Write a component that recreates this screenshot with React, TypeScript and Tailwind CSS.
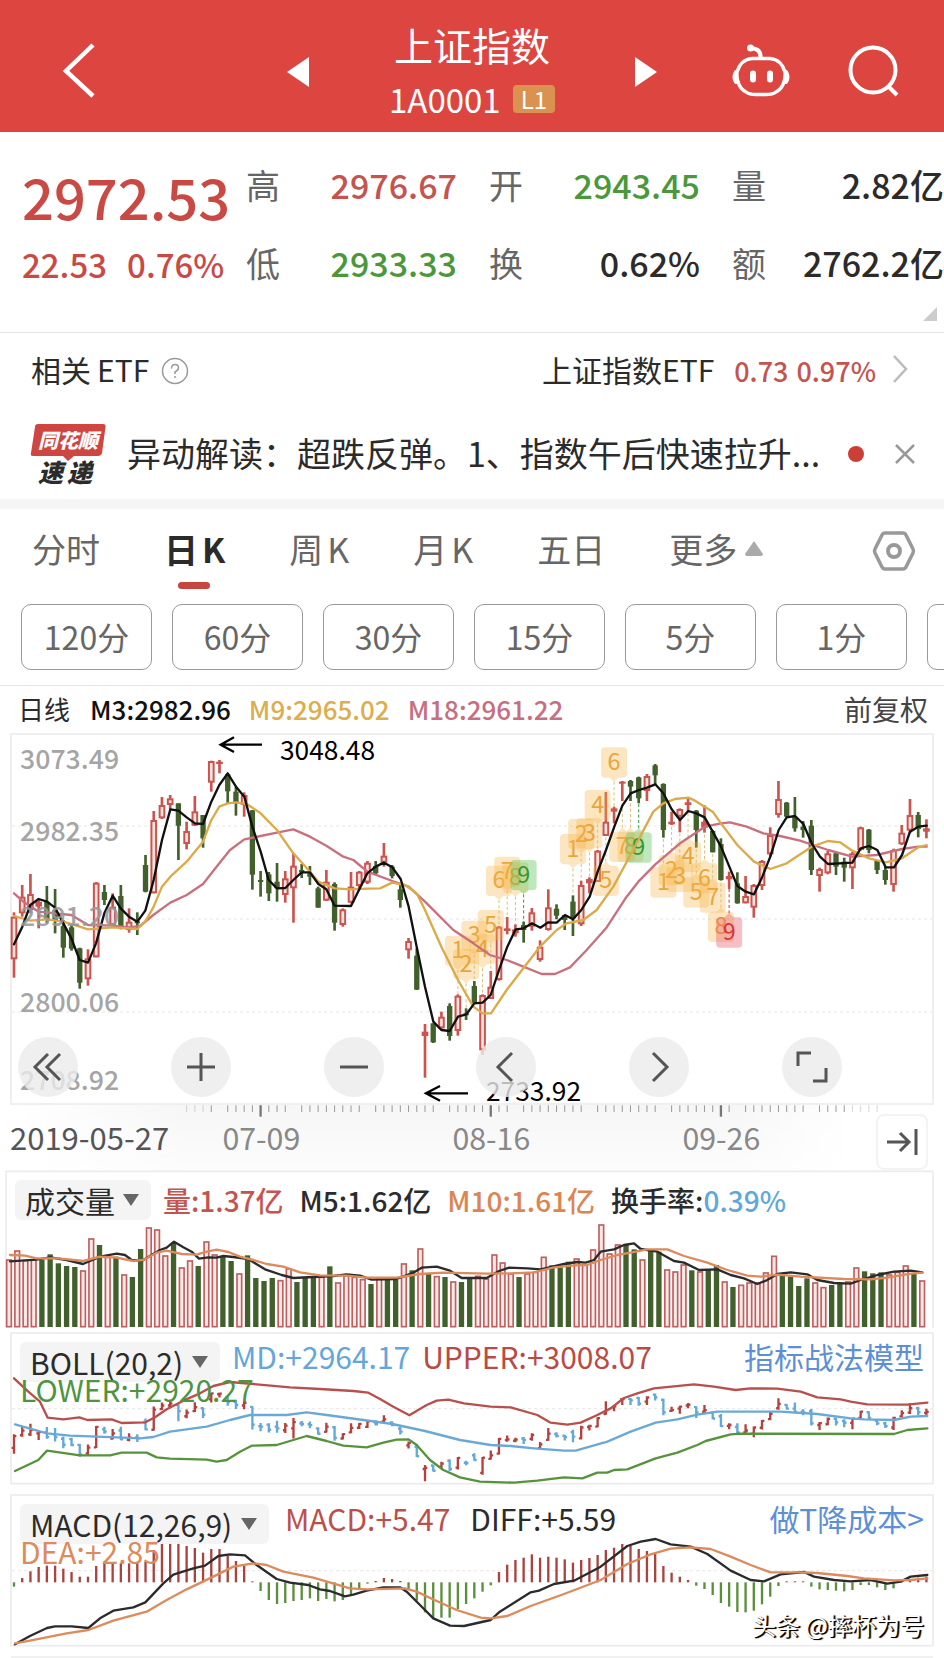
import type { ReactNode } from "react"
import clsx from "clsx"

type Direction = "up" | "down"
type Point = [number, number]

// [direction, high, body top, body bottom, low], oldest first
type Candle = [Direction, number, number, number, number]

const STEP = 24.66
const FIRST_X = 42
const candleX = (i: number) => FIRST_X + STEP * i

const u = "up" as const
const d = "down" as const

const CANDLES: Candle[] = [
  [u, 697, 710, 838, 893], [u, 615, 650, 700, 710], [u, 582, 642, 690, 700], [u, 655, 665, 680, 745],
  [d, 618, 665, 720, 730], [d, 627, 690, 720, 760], [d, 720, 738, 803, 833], [d, 735, 742, 806, 812],
  [d, 803, 805, 908, 926], [u, 808, 835, 898, 917], [u, 606, 608, 832, 832], [d, 615, 636, 660, 675],
  [u, 640, 680, 735, 740], [d, 615, 648, 745, 748], [u, 685, 725, 750, 758], [d, 697, 724, 730, 765],
  [d, 525, 555, 635, 637], [u, 393, 420, 640, 640], [u, 351, 375, 415, 417], [u, 345, 355, 375, 388],
  [d, 370, 370, 437, 540], [u, 425, 453, 492, 508], [u, 348, 394, 437, 438], [d, 405, 405, 475, 503],
  [u, 242, 243, 308, 335], [u, 240, 245, 252, 280], [d, 280, 283, 334, 370], [d, 320, 335, 370, 407],
  [u, 337, 345, 375, 410], [d, 390, 391, 584, 629], [d, 573, 600, 606, 650], [d, 576, 583, 640, 663],
  [d, 549, 605, 625, 665], [u, 573, 595, 645, 668], [u, 520, 557, 625, 728], [d, 552, 570, 577, 594],
  [d, 558, 580, 590, 615], [d, 620, 625, 683, 683], [u, 570, 605, 662, 663], [d, 607, 612, 728, 752],
  [u, 685, 688, 735, 740], [u, 576, 620, 668, 670], [u, 573, 575, 618, 625], [u, 543, 548, 608, 612],
  [d, 543, 558, 580, 585], [u, 489, 527, 548, 560], [d, 555, 560, 588, 595], [d, 610, 628, 660, 683],
  [u, 774, 783, 811, 836], [d, 805, 827, 929, 930], [u, 1032, 1055, 1068, 1193], [d, 1030, 1030, 1087, 1089],
  [u, 995, 1010, 1045, 1050], [d, 970, 978, 1068, 1082], [u, 943, 947, 1053, 1067], [d, 985, 1000, 1004, 1020],
  [d, 903, 918, 970, 970], [u, 943, 945, 1111, 1124], [u, 873, 920, 957, 957], [u, 738, 740, 900, 902],
  [u, 711, 745, 753, 763], [u, 733, 748, 760, 770], [d, 725, 735, 750, 788], [u, 684, 697, 740, 752],
  [u, 781, 800, 840, 845], [u, 628, 682, 750, 752], [d, 673, 686, 707, 718], [d, 705, 705, 720, 750],
  [d, 646, 665, 715, 768], [u, 602, 615, 733, 738], [u, 592, 597, 610, 640], [u, 510, 512, 606, 606],
  [u, 336, 425, 468, 468], [u, 380, 385, 395, 430], [u, 303, 305, 310, 363], [d, 300, 303, 320, 363],
  [d, 290, 292, 355, 370], [u, 282, 288, 333, 363], [d, 252, 256, 286, 312], [d, 310, 312, 450, 473],
  [u, 395, 425, 433, 435], [u, 385, 387, 410, 457], [u, 355, 367, 375, 398], [d, 390, 392, 450, 503],
  [u, 376, 425, 443, 458], [d, 450, 453, 517, 517], [d, 475, 492, 600, 602], [u, 575, 588, 598, 627],
  [d, 577, 610, 670, 671], [u, 588, 648, 670, 670], [u, 612, 615, 683, 713], [u, 540, 543, 618, 630],
  [u, 442, 465, 523, 530], [u, 303, 357, 405, 413], [d, 366, 368, 410, 412], [d, 351, 410, 445, 455],
  [d, 423, 440, 450, 473], [d, 420, 437, 570, 585], [u, 563, 567, 588, 635], [u, 513, 520, 580, 583],
  [d, 518, 520, 560, 585], [d, 533, 545, 563, 605], [u, 516, 520, 565, 627], [u, 440, 442, 510, 512],
  [d, 447, 449, 510, 520], [d, 540, 543, 570, 582], [d, 560, 570, 600, 614], [u, 506, 510, 615, 635],
  [u, 435, 458, 493, 495], [u, 357, 405, 452, 460], [d, 396, 405, 447, 472], [u, 418, 445, 455, 475],
]

const MA3: Point[] = [
  [42, 793], [67, 740], [91, 675], [116, 657], [141, 665], [165, 683], [190, 730], [214, 775], [239, 840],
  [264, 848], [288, 790], [313, 700], [338, 647], [362, 685], [387, 710], [412, 725], [436, 692], [461, 600],
  [486, 480], [511, 388], [535, 392], [560, 412], [585, 430], [609, 432], [634, 365], [658, 315], [683, 280],
  [708, 320], [733, 350], [757, 440], [782, 515], [806, 600], [831, 625], [856, 624], [880, 600], [905, 577],
  [930, 577], [955, 612], [979, 628], [1004, 677], [1053, 678], [1102, 580], [1127, 560], [1152, 548],
  [1177, 562], [1202, 597], [1226, 680], [1250, 800], [1275, 920], [1300, 1025], [1324, 1050], [1349, 1053],
  [1374, 1010], [1399, 1003], [1423, 970], [1448, 968], [1472, 945], [1497, 870], [1522, 800], [1547, 748],
  [1571, 745], [1596, 730], [1621, 743], [1645, 727], [1670, 728], [1695, 705], [1719, 718], [1744, 690],
  [1769, 650], [1793, 575], [1818, 510], [1843, 440], [1867, 377], [1892, 340], [1917, 330], [1941, 323],
  [1966, 313], [1990, 340], [2015, 388], [2040, 420], [2065, 393], [2089, 400], [2114, 412], [2138, 455],
  [2163, 500], [2188, 560], [2212, 618], [2237, 635], [2262, 643], [2287, 590], [2311, 530], [2336, 450],
  [2360, 412], [2385, 408], [2410, 432], [2435, 490], [2460, 530], [2484, 552], [2557, 548], [2582, 505],
  [2607, 498], [2632, 510], [2657, 562], [2682, 562], [2706, 525], [2730, 455], [2755, 440], [2780, 437],
]

const MA9: Point[] = [
  [42, 708], [91, 722], [141, 718], [190, 725], [239, 740], [264, 748], [338, 742], [412, 747], [436, 725],
  [461, 680], [486, 620], [511, 590], [560, 545], [609, 485], [634, 420], [658, 380], [683, 370], [708, 367],
  [740, 372], [782, 400], [831, 450], [880, 520], [930, 575], [955, 605], [1004, 625], [1053, 628], [1102, 626],
  [1140, 625], [1177, 608], [1215, 615], [1250, 640], [1275, 690], [1324, 800], [1374, 900], [1420, 980],
  [1448, 1000], [1473, 1000], [1520, 930], [1570, 865], [1620, 800], [1670, 750], [1700, 730], [1750, 720],
  [1790, 690], [1840, 620], [1867, 570], [1915, 480], [1960, 395], [1990, 370], [2025, 357], [2065, 353],
  [2085, 362], [2138, 395], [2163, 430], [2212, 495], [2262, 545], [2311, 567], [2360, 550], [2435, 500],
  [2484, 483], [2520, 487], [2557, 512], [2607, 535], [2657, 547], [2706, 535], [2755, 502], [2780, 495],
]

const MA18: Point[] = [
  [42, 640], [70, 665], [116, 695], [165, 700], [214, 705], [264, 735], [338, 737], [387, 742], [420, 738],
  [460, 705], [511, 668], [560, 645], [609, 612], [658, 550], [690, 510], [733, 478], [782, 468], [831, 458],
  [880, 448], [930, 470], [979, 497], [1030, 530], [1060, 540], [1102, 575], [1177, 603], [1226, 620],
  [1275, 665], [1360, 750], [1420, 790], [1470, 825], [1520, 840], [1570, 860], [1625, 882], [1665, 882],
  [1710, 862], [1760, 810], [1818, 745], [1880, 650], [1915, 605], [1966, 553], [2040, 490], [2115, 440],
  [2163, 430], [2190, 427], [2240, 440], [2290, 460], [2340, 468], [2400, 482], [2484, 510], [2557, 530],
  [2630, 525], [2706, 507], [2755, 500], [2780, 500],
]

// TD sequence markers: [candle index, count, y of the digit, side of the candle]
type Marker = [number, number, number, "above" | "below"]

const MARKERS: Marker[] = [
  [54, 1, 810, "above"], [55, 2, 850, "above"], [56, 3, 765, "above"], [57, 4, 805, "above"], [58, 5, 733, "above"],
  [59, 6, 600, "above"], [60, 7, 573, "above"], [61, 8, 590, "above"], [62, 9, 583, "above"],
  [68, 1, 505, "above"], [69, 2, 460, "above"], [70, 3, 457, "above"], [71, 4, 373, "above"], [72, 5, 600, "below"],
  [73, 6, 245, "above"], [74, 7, 498, "below"], [75, 8, 498, "below"], [76, 9, 500, "below"],
  [79, 1, 605, "below"], [80, 2, 568, "below"], [81, 3, 588, "below"], [82, 4, 528, "below"], [83, 5, 635, "below"],
  [84, 6, 592, "below"], [85, 7, 650, "below"], [86, 8, 738, "below"], [87, 9, 755, "below"],
]

const VOLUME_TOPS = [
  298, 271, 300, 298, 300, 283, 310, 318, 321, 331, 235, 255, 290, 290, 343, 351, 267, 202, 208, 286, 248, 322, 301,
  318, 244, 283, 288, 303, 340, 286, 354, 363, 354, 360, 325, 366, 354, 354, 350, 319, 367, 345, 350, 357, 372, 355,
  357, 360, 310, 331, 265, 342, 348, 351, 364, 366, 357, 347, 355, 283, 307, 340, 351, 340, 335, 290, 316, 322, 305,
  295, 313, 268, 193, 280, 253, 255, 268, 298, 273, 275, 328, 334, 313, 331, 334, 328, 315, 364, 381, 374, 367, 367,
  337, 287, 348, 350, 378, 355, 367, 381, 375, 372, 364, 322, 334, 340, 337, 343, 335, 316, 340, 361,
]

const VOLUME_DOWN = new Set([
  4, 5, 6, 7, 8, 11, 13, 15, 16, 20, 23, 26, 27, 29, 30, 31, 32, 35, 36, 37, 39, 44, 46, 47, 49, 51, 53, 55, 56, 62,
  66, 67, 68, 75, 76, 78, 79, 83, 85, 86, 88, 94, 95, 96, 97, 100, 101, 104, 105, 106, 110,
])

const VOLUME_MA5: Point[] = [
  [30, 304], [110, 299], [150, 292], [200, 300], [249, 312], [300, 290], [350, 281], [375, 285], [395, 300],
  [425, 303], [450, 288], [480, 270], [500, 263], [522, 245], [550, 262], [575, 275], [597, 296], [625, 292],
  [650, 293], [670, 288], [700, 291], [745, 297], [795, 328], [845, 345], [880, 354], [1000, 348], [1040, 343],
  [1080, 347], [1115, 359], [1190, 357], [1240, 338], [1265, 323], [1310, 320], [1350, 332], [1385, 354],
  [1460, 354], [1497, 333], [1527, 323], [1582, 325], [1622, 328], [1692, 312], [1732, 306], [1757, 308],
  [1782, 300], [1802, 275], [1842, 268], [1872, 255], [1902, 250], [1922, 267], [1972, 275], [2022, 303],
  [2052, 308], [2097, 330], [2152, 328], [2192, 345], [2232, 355], [2272, 372], [2302, 360], [2332, 342],
  [2372, 337], [2422, 343], [2452, 360], [2502, 369], [2552, 371], [2582, 360], [2632, 345], [2682, 335],
  [2732, 332], [2767, 337],
]

const VOLUME_MA10: Point[] = [
  [30, 285], [75, 287], [110, 295], [175, 295], [250, 303], [300, 290], [350, 293], [400, 303], [430, 300],
  [470, 278], [500, 272], [545, 282], [590, 284], [620, 275], [650, 269], [685, 276], [720, 290], [760, 300],
  [800, 312], [850, 320], [900, 337], [960, 346], [1040, 347], [1100, 353], [1190, 353], [1260, 342], [1330, 338],
  [1462, 341], [1532, 340], [1602, 337], [1662, 322], [1722, 316], [1762, 315], [1802, 300], [1852, 285],
  [1892, 278], [1942, 268], [2002, 268], [2052, 288], [2122, 308], [2182, 330], [2242, 347], [2282, 350],
  [2332, 344], [2402, 350], [2532, 357], [2612, 358], [2662, 353], [2732, 341], [2767, 338],
]

const BOLL_UPPER: Point[] = [
  [42, -65], [85, -25], [120, 5], [143, 53], [190, 58], [238, 52], [262, 60], [335, 58], [365, 69], [436, 67],
  [465, 52], [500, 28], [550, 2], [600, -20], [640, -42], [690, -54], [760, -48], [870, -38], [960, -33],
  [1060, -27], [1105, -22], [1140, -3], [1180, 20], [1228, 46], [1280, 15], [1310, 2], [1345, -1], [1392, 10],
  [1472, 20], [1532, 22], [1612, 45], [1652, 68], [1702, 74], [1742, 68], [1792, 45], [1832, 25], [1872, -6],
  [1912, -20], [1962, -35], [2082, -47], [2142, -40], [2207, -30], [2252, -35], [2332, -34], [2402, -25],
  [2452, -8], [2522, -2], [2552, 5], [2602, 13], [2722, 14], [2782, 8],
]

const BOLL_MID: Point[] = [
  [45, 73], [141, 100], [210, 107], [370, 113], [420, 115], [460, 111], [510, 95], [620, 80], [690, 60], [750, 45],
  [860, 45], [920, 37], [980, 45], [1090, 60], [1177, 72], [1275, 93], [1380, 120], [1472, 135], [1532, 138],
  [1602, 145], [1692, 152], [1727, 152], [1822, 125], [1892, 95], [1967, 68], [2032, 58], [2092, 44], [2152, 35],
  [2342, 35], [2452, 42], [2552, 55], [2592, 58], [2682, 60], [2732, 50], [2782, 48],
]

const BOLL_LOWER: Point[] = [
  [45, 213], [115, 180], [141, 152], [240, 166], [330, 166], [365, 158], [440, 158], [470, 172], [510, 176],
  [620, 179], [650, 185], [680, 180], [720, 155], [755, 137], [830, 135], [880, 120], [920, 108], [980, 123],
  [1030, 137], [1100, 142], [1150, 128], [1190, 119], [1226, 118], [1250, 135], [1290, 180], [1330, 210],
  [1380, 232], [1440, 245], [1542, 248], [1612, 242], [1692, 232], [1747, 235], [1792, 218], [1822, 218],
  [1842, 210], [1882, 208], [1967, 175], [2032, 158], [2092, 135], [2117, 123], [2192, 103], [2222, 101],
  [2682, 102], [2722, 90], [2782, 85],
]

const MACD_BARS = [
  560, 534, 514, 501, 497, 497, 506, 516, 530, 530, 498, 485, 490, 490, 490, 487, 485, 450, 430, 425, 425, 438, 444,
  458, 447, 447, 467, 483, 497, 544, 573, 600, 612, 609, 603, 600, 595, 603, 597, 604, 600, 585, 568, 551, 543, 534,
  537, 543, 570, 602, 637, 653, 653, 653, 627, 612, 595, 575, 556, 516, 494, 480, 473, 463, 473, 470, 473, 478, 488,
  480, 474, 465, 450, 443, 432, 437, 447, 453, 462, 498, 518, 530, 540, 557, 567, 585, 609, 620, 636, 637, 632, 613,
  590, 558, 544, 544, 544, 560, 568, 570, 572, 574, 570, 555, 555, 562, 570, 565, 540, 537, 533, 530,
]

const DIFF: Point[] = [
  [45, 733], [90, 708], [141, 684], [165, 679], [215, 679], [265, 684], [300, 655], [340, 632], [400, 622],
  [436, 607], [490, 550], [520, 524], [580, 505], [615, 497], [655, 468], [690, 463], [735, 466], [770, 495],
  [830, 537], [870, 548], [925, 555], [960, 568], [990, 573], [1035, 589], [1060, 584], [1100, 572], [1150, 562],
  [1200, 562], [1220, 575], [1260, 615], [1300, 655], [1350, 677], [1392, 678], [1472, 660], [1497, 637],
  [1592, 577], [1617, 572], [1662, 552], [1722, 542], [1802, 500], [1882, 438], [1922, 425], [1967, 417],
  [2012, 433], [2072, 440], [2122, 462], [2192, 512], [2252, 540], [2292, 544], [2342, 523], [2412, 516],
  [2442, 530], [2502, 540], [2552, 544], [2612, 540], [2662, 551], [2702, 545], [2732, 530], [2782, 525],
]

const DEA: Point[] = [
  [45, 730], [90, 722], [200, 700], [265, 690], [340, 662], [440, 635], [500, 600], [560, 568], [640, 530],
  [700, 500], [760, 490], [800, 495], [850, 515], [940, 533], [1050, 565], [1100, 568], [1215, 565], [1250, 575],
  [1310, 603], [1370, 630], [1442, 653], [1472, 655], [1522, 648], [1592, 618], [1692, 582], [1802, 540],
  [1882, 492], [1952, 463], [2012, 446], [2072, 442], [2132, 447], [2192, 470], [2252, 495], [2312, 517],
  [2402, 517], [2452, 519], [2542, 528], [2592, 535], [2682, 541], [2732, 540], [2782, 535],
]

const PRICE_LABELS = [
  { text: "3073.49", y: 267 },
  { text: "2982.35", y: 482 },
  { text: "2891.20", y: 737 },
  { text: "2800.06", y: 995 },
  { text: "2708.92", y: 1229 },
]

const RED = "#cb544e"
const GREEN = "#42602c"

function Line({ points, color, width = 7 }: { points: Point[]; color: string; width?: number }) {
  return (
    <polyline
      points={points.map((p) => p.join(",")).join(" ")}
      fill="none"
      stroke={color}
      strokeWidth={width}
      strokeLinejoin="round"
      strokeLinecap="round"
    />
  )
}

function GridLine({ y }: { y: number }) {
  return <path d={`M36 ${y}H2796`} stroke="#e6e6e6" strokeWidth="3" strokeDasharray="9 9" />
}

function CandleShape({ candle, x }: { candle: Candle; x: number }) {
  const [dir, high, top, bottom, low] = candle
  const height = Math.max(bottom - top, 6)
  if (dir === "down") {
    return (
      <g fill={GREEN}>
        <rect x={x - 4} y={high} width="8" height={low - high} />
        <rect x={x - 8} y={top} width="16" height={height} />
      </g>
    )
  }
  return (
    <g fill={RED}>
      <rect x={x - 4} y={high} width="8" height={low - high} />
      <rect x={x - 10} y={top} width="20" height={height} />
      {height > 18 && <rect x={x - 4} y={top + 6} width="8" height={height - 12} fill="#fbe3df" />}
    </g>
  )
}

function MarkerTag({ marker }: { marker: Marker }) {
  const [index, count, y, side] = marker
  const x = candleX(index)
  const above = side === "above"
  const last = count === 9
  const green = above || index === 76
  const fill = last ? (green ? "#5cc45c" : "#e8606a") : "#f7b64a"
  const color = last ? (green ? "#2f9a34" : "#d8333c") : "#e9a53b"
  const [, high, , , low] = CANDLES[index]
  const tip = above ? `M${x - 14} ${y + 48}h28l-14 12z` : `M${x - 14} ${y - 43}h28l-14 -12z`
  return (
    <g>
      <path
        d={above ? `M${x} ${y + 60}V${high}` : `M${x} ${y - 55}V${low}`}
        stroke={last ? color : "#d9c07c"}
        strokeWidth="3"
        strokeDasharray="9 7"
      />
      <g fill={fill} fillOpacity={last ? 0.4 : 0.34}>
        <rect x={x - 39} y={y - 43} width="78" height="91" rx="12" />
        <path d={tip} />
      </g>
      <text x={x} y={y + 25} fontSize="70" textAnchor="middle" fill={color}>
        {count}
      </text>
    </g>
  )
}

function PriceChart() {
  const ticks = Array.from({ length: 85 }, (_, n) => n + 21).filter((i) => i % 9 !== 7)
  return (
    <svg viewBox="0 159 2832 1311" className="block w-full overflow-visible" role="img" aria-label="日线">
      <defs>
        <linearGradient id="axis-shade">
          <stop offset="0.02" stopColor="#fff" />
          <stop offset="0.2" stopColor="#f6f6f6" />
          <stop offset="0.78" stopColor="#f6f6f6" />
          <stop offset="0.9" stopColor="#fff" />
        </linearGradient>
        <linearGradient id="axis-fade" x2="0" y2="1">
          <stop offset="0" stopColor="#fff" stopOpacity="0" />
          <stop offset="1" stopColor="#fff" stopOpacity="0.7" />
        </linearGradient>
      </defs>
      <rect x="0" y="1274" width="2832" height="196" fill="url(#axis-shade)" />
      <rect x="0" y="1274" width="2832" height="196" fill="url(#axis-fade)" />
      <rect x="33" y="162" width="2766" height="1110" fill="#fff" stroke="#ececec" strokeWidth="5" />
      <GridLine y={438} />
      <GridLine y={717} />
      <GridLine y={996} />

      {CANDLES.map((candle, i) => (
        <CandleShape key={i} candle={candle} x={candleX(i)} />
      ))}
      {MARKERS.map((marker) => (
        <MarkerTag key={marker[0]} marker={marker} />
      ))}

      <Line points={MA18} color="#c9707f" />
      <Line points={MA9} color="#dcaa48" />
      <Line points={MA3} color="#111" />

      <g fontSize="80" fontWeight="500" fill="#999" fillOpacity="0.9">
        {PRICE_LABELS.map((label) => (
          <text key={label.text} x="60" y={label.y}>
            {label.text}
          </text>
        ))}
      </g>

      <g fill="none" stroke="#000" strokeWidth="7">
        <path d="M786 194H662M702 172L662 194L702 216" />
        <path d="M1404 1240H1278M1320 1218L1278 1240L1320 1262" />
      </g>
      <g fontSize="79">
        <text x="840" y="240">3048.48</text>
        <text x="1458" y="1262">2733.92</text>
      </g>

      <g stroke="#999" strokeWidth="3">
        {ticks.map((i) => (
          <path key={i} d={`M${candleX(i)} 1276V1296`} opacity={i < 24 || i > 101 ? 0.4 : 1} />
        ))}
      </g>
      <g stroke="#777" strokeWidth="7">
        {[30, 58, 86].map((i) => (
          <path key={i} d={`M${candleX(i)} 1276V1310`} />
        ))}
      </g>
      <g fontSize="91" fill="#888">
        <text x="30" y="1410" fontSize="93" fill="#555">2019-05-27</text>
        <text x="784" y="1410" textAnchor="middle">07-09</text>
        <text x="1474" y="1410" textAnchor="middle">08-16</text>
        <text x="2164" y="1410" textAnchor="middle">09-26</text>
      </g>
    </svg>
  )
}

function VolumeChart() {
  return (
    <svg viewBox="0 30 2832 486" className="block w-full" role="img" aria-label="成交量">
      <path d="M18 503V34H2799V503" fill="none" stroke="#ececec" strokeWidth="5" />
      {VOLUME_TOPS.map((top, i) => {
        const x = 27 + 24.68 * i
        return VOLUME_DOWN.has(i) ? (
          <rect key={i} x={x - 8} y={top} width="16" height={501 - top} fill={GREEN} />
        ) : (
          <rect
            key={i}
            x={x - 7}
            y={top + 2}
            width="14"
            height={498 - top}
            fill="#fdeae7"
            stroke="#bf5f5f"
            strokeWidth="5"
          />
        )
      })}
      <Line points={VOLUME_MA5} color="#2b2b2b" />
      <Line points={VOLUME_MA10} color="#dd8a5c" />
    </svg>
  )
}

// the band chart squeezes the price range to about a quarter
const bollY = (y: number) => 105 + (y - 697) * 0.275

function BollChart() {
  return (
    <svg viewBox="0 -204 2832 486" className="block w-full" role="img" aria-label="BOLL">
      <rect x="33" y="-201" width="2766" height="452" fill="none" stroke="#ececec" strokeWidth="5" />
      <GridLine y={26} />
      {CANDLES.map(([dir, high, top, bottom, low], i) => {
        const x = candleX(i)
        const open = bollY(dir === "up" ? bottom : top)
        const close = bollY(dir === "up" ? top : bottom)
        return (
          <path
            key={i}
            d={`M${x} ${bollY(high) - 2}V${bollY(low) + 2}M${x - 7} ${open}H${x}M${x} ${close}H${x + 7}`}
            stroke={dir === "up" ? "#b5413e" : "#62a8d8"}
            strokeWidth="7"
          />
        )
      })}
      <Line points={BOLL_UPPER} color="#b94f4c" />
      <Line points={BOLL_MID} color="#6aa9d6" />
      <Line points={BOLL_LOWER} color="#56933c" />
    </svg>
  )
}

function MacdChart() {
  const zero = 547
  return (
    <svg viewBox="0 282 2832 492" className="block w-full" role="img" aria-label="MACD">
      <rect x="33" y="285" width="2766" height="452" fill="none" stroke="#ececec" strokeWidth="5" />
      <path d="M33 771H2799" stroke="#ececec" strokeWidth="5" />
      <GridLine y={512} />
      {MACD_BARS.map((y, i) => (
        <path
          key={i}
          d={`M${candleX(i)} ${zero}V${y}`}
          stroke={y < zero ? "#a8433f" : "#5a8f3c"}
          strokeWidth="7"
        />
      ))}
      <Line points={DIFF} color="#2b2b2b" />
      <Line points={DEA} color="#dd8a5c" />
    </svg>
  )
}

interface IndicatorPanelProps {
  name: string
  chart: ReactNode
  wide?: boolean
  children: ReactNode
}

function IndicatorPanel({ name, chart, wide, children }: IndicatorPanelProps) {
  return (
    <section className="grid">
      <div className="col-start-1 row-start-1">{chart}</div>
      <div
        className={clsx(
          "relative z-10 col-start-1 row-start-1 flex items-start self-start whitespace-nowrap pt-[10px]",
          wide ? "px-5 text-[30px] leading-[28px]" : "gap-4 pl-[15px] text-[28px] font-medium leading-[40px]"
        )}
      >
        <label className={clsx("relative flex h-10 shrink-0 items-center rounded-md bg-[#f3f3f3]/95", !wide && "w-[136px]")}>
          <select
            aria-label={name}
            className="h-10 cursor-pointer appearance-none bg-transparent pl-[10px] pr-9 text-[30px] font-normal leading-[40px] text-[#2b2b2b] outline-none"
          >
            <option>{name}</option>
          </select>
          <svg viewBox="0 0 16 12" className="pointer-events-none absolute right-3 h-3 w-4 fill-[#666]" aria-hidden="true">
            <path d="M0 0h16L8 12z" />
          </svg>
        </label>
        {children}
      </div>
    </section>
  )
}

function QuoteCell({ label, value, tone, flush }: { label: string; value: string; tone?: string; flush?: boolean }) {
  return (
    <div className={clsx("flex items-center justify-between whitespace-nowrap", !flush && "pr-8")}>
      <dt className="text-[#666]">{label}</dt>
      <dd className={clsx("font-medium", tone ?? "text-[#2b2b2b]")}>{value}</dd>
    </div>
  )
}

const PERIODS = ["分时", "日K", "周K", "月K", "五日"]
const MINUTES = ["120分", "60分", "30分", "15分", "5分", "1分"]

function PeriodName({ text }: { text: string }) {
  return text.endsWith("K") ? (
    <span className="flex items-center gap-1">
      <span>{text.slice(0, -1)}</span>
      <span>K</span>
    </span>
  ) : (
    <span>{text}</span>
  )
}

const CHART_BUTTONS = [
  { label: "最早", path: "M20 7L7 20L20 33M32 7L19 20L32 33" },
  { label: "放大", path: "M20 6V34M6 20H34" },
  { label: "缩小", path: "M6 20H34" },
  { label: "向前", path: "M26 6L12 20L26 34" },
  { label: "向后", path: "M14 6L28 20L14 34" },
  { label: "全屏", path: "M6 19V6H19M34 21V34H21" },
]

export default function App() {
  return (
    <main className="w-full overflow-hidden bg-white font-['Noto_Sans_CJK_SC','Noto_Sans',sans-serif] text-[#2b2b2b]">
      <header className="grid h-[132px] grid-cols-[1fr_auto_1fr] items-center bg-[#dd4541] text-white">
        <button type="button" aria-label="返回" className="ml-[62px] justify-self-start pt-2">
          <svg viewBox="0 0 34 56" className="h-14 w-[34px]" fill="none" stroke="currentColor" strokeWidth="4.500">
            <path d="M31 3L4 29L31 54" />
          </svg>
        </button>
        <div className="flex items-center gap-20">
          <button type="button" aria-label="上一个" className="pt-3">
            <svg viewBox="0 0 22 30" className="h-[30px] w-[22px] fill-white">
              <path d="M22 0V30L0 15z" />
            </svg>
          </button>
          <div className="flex flex-col items-center gap-3 pt-2">
            <h1 className="text-[39px] leading-[46px]">上证指数</h1>
            <p className="flex items-center gap-3 text-[33px] leading-[40px]">
              1A0001
              <span className="rounded-sm bg-[#d9924f] px-2 text-[24px] leading-[28px]">L1</span>
            </p>
          </div>
          <button type="button" aria-label="下一个" className="pt-3">
            <svg viewBox="0 0 22 30" className="h-[30px] w-[22px] fill-white">
              <path d="M0 0V30L22 15z" />
            </svg>
          </button>
        </div>
        <div className="flex items-center gap-[58px] justify-self-end pr-11 pt-[10px]">
          <button type="button" aria-label="智能助手">
            <svg viewBox="0 0 58 54" className="h-[54px] w-[58px]" fill="none" stroke="currentColor" strokeLinecap="round">
              <path
                d="M20 14.500H38C46 15 51 21 53 28C54 37 50 45 44 48Q41 50.500 34 50.500H24Q17 50.500 14 48C8 45 4 37 5 28C7 21 12 15 20 14.500z"
                strokeWidth="3.500"
              />
              <path d="M28.500 13Q29 5 19 4" strokeWidth="4" />
              <circle cx="18.500" cy="4" r="2" fill="currentColor" strokeWidth="3" />
              <path d="M21 29.500V35.500M38 29.500V35.500" strokeWidth="6" />
              <path d="M4 28Q1 33 4 38M54 28Q57 33 54 38" strokeWidth="4" />
            </svg>
          </button>
          <button type="button" aria-label="搜索">
            <svg viewBox="0 0 52 54" className="h-[54px] w-[52px]" fill="none" stroke="currentColor" strokeWidth="4">
              <circle cx="25" cy="26" r="22.500" />
              <path d="M40 42L49 51" />
            </svg>
          </button>
        </div>
      </header>

      <section className="relative grid h-[200px] grid-cols-[246fr_698fr]">
        <div className="flex flex-col whitespace-nowrap pl-[22px] pt-8 font-medium text-[#c94a45]">
          <p className="text-[56px] leading-[64px]">2972.53</p>
          <p className="flex gap-5 pt-4 text-[33px] leading-[40px]">
            <span>22.53</span>
            <span>0.76%</span>
          </p>
        </div>
        <dl className="grid grid-cols-[243fr_243fr_212fr] content-start gap-y-9 pt-8 text-[34px] leading-[42px]">
          <QuoteCell label="高" value="2976.67" tone="text-[#c4544f]" />
          <QuoteCell label="开" value="2943.45" tone="text-[#4b983b]" />
          <QuoteCell label="量" value="2.82亿" flush />
          <QuoteCell label="低" value="2933.33" tone="text-[#4b983b]" />
          <QuoteCell label="换" value="0.62%" />
          <QuoteCell label="额" value="2762.2亿" flush />
        </dl>
        <svg viewBox="0 0 14 14" className="absolute bottom-[11px] right-[7px] size-[14px] fill-[#ccc]" aria-hidden="true">
          <path d="M14 0V14H0z" />
        </svg>
      </section>

      <section className="border-t border-[#e6e6e6]">
        <div className="flex h-[76px] items-center justify-between whitespace-nowrap pb-1 pl-[31px] pr-9">
          <div className="flex items-center text-[30px] leading-[40px]">
            相关<span className="pl-[6px]">ETF</span>
            <button type="button" aria-label="说明" className="ml-3 pt-1">
              <svg viewBox="0 0 28 28" className="size-7" fill="none" stroke="#999" strokeWidth="1.500">
                <circle cx="14" cy="14" r="12.500" />
                <path d="M10.500 11.500Q10.500 7.500 14 7.500T17.500 11Q17.500 13 14 15V17M14 19V21" />
              </svg>
            </button>
          </div>
          <a href="#etf" className="flex items-center text-[30px] leading-[40px]">
            上证指数ETF
            <span className="flex gap-2 pl-5 pt-1 text-[27px] font-medium text-[#c4544f]">
              <span>0.73</span>
              <span>0.97%</span>
            </span>
            <svg viewBox="0 0 16 28" className="ml-4 h-7 w-4" fill="none" stroke="#bbb" strokeWidth="2.500">
              <path d="M2 1L14 14L2 27" />
            </svg>
          </a>
        </div>
        <div className="flex h-[90px] items-center pl-[30px] pr-7">
          <svg viewBox="0 0 76 62" className="h-[62px] w-[76px] shrink-0 overflow-visible" role="img" aria-label="同花顺速递">
            <path d="M8 1H73Q76 1 75.500 4L72 30Q71 33 68 33H44L38 38L33 33H3Q0 33 1 30L5 4Q5 1 8 1z" fill="#cf4640" />
            <g fontStyle="italic" fontWeight="900">
              <text x="38" y="25" fontSize="20" textAnchor="middle" fill="#fff">同花顺</text>
              <text x="8" y="59" fontSize="25" fill="#2b2b2b">速</text>
              <text x="37" y="59" fontSize="25" fill="#2b2b2b">递</text>
            </g>
          </svg>
          <a href="#news" className="ml-[21px] whitespace-nowrap pb-[2px] text-[34px] leading-[46px]">
            异动解读：超跌反弹。1、指数午后快速拉升...
          </a>
          <span className="ml-auto size-4 shrink-0 rounded-full bg-[#cb3f37]" />
          <button type="button" aria-label="关闭" className="ml-[30px]">
            <svg viewBox="0 0 22 22" className="size-[22px]" fill="none" stroke="#999" strokeWidth="2.500">
              <path d="M2 2L20 20M20 2L2 20" />
            </svg>
          </button>
        </div>
      </section>

      <div className="h-[10px] bg-[#f5f5f5]" />

      <nav className="flex h-[83px] items-center whitespace-nowrap pl-8 pr-7 text-[34px] leading-[46px] text-[#666]">
        <div className="flex h-full items-stretch gap-16">
          {PERIODS.map((period) => {
            const active = period === "日K"
            return (
              <button
                key={period}
                type="button"
                className={clsx("relative pb-1", active && "font-bold text-[#2b2b2b]")}
              >
                <PeriodName text={period} />
                {active && <span className="absolute bottom-[3px] left-[14px] h-[7px] w-8 rounded-full bg-[#c9453f]" />}
              </button>
            )
          })}
          <button type="button" className="flex items-center gap-2 pb-1">
            更多
            <svg viewBox="0 0 18 15" className="h-[15px] w-[18px] fill-[#aaa]" aria-hidden="true">
              <path d="M9 0L18 13Q18 15 16 15H2Q0 15 0 13z" />
            </svg>
          </button>
        </div>
        <button type="button" aria-label="设置" className="ml-auto">
          <svg viewBox="0 0 44 42" className="h-[42px] w-11" fill="none" stroke="#999" strokeLinejoin="round">
            <path d="M13 3H31Q33 3 34 5L41 19Q42 21 41 23L34 37Q33 39 31 39H13Q11 39 10 37L3 23Q2 21 3 19L10 5Q11 3 13 3z" strokeWidth="3.500" />
            <circle cx="22" cy="21" r="6" strokeWidth="4" />
          </svg>
        </button>
      </nav>

      <div className="flex gap-5 overflow-hidden border-b border-[#e6e6e6] pb-[15px] pl-[21px] pt-3 text-[32px] leading-[40px] text-[#666]">
        {MINUTES.map((item) => (
          <button
            key={item}
            type="button"
            className="h-[66px] w-[131px] shrink-0 rounded-[10px] border border-[#999] pb-[2px]"
          >
            {item}
          </button>
        ))}
        <button type="button" aria-label="更多周期" className="h-[66px] w-[131px] shrink-0 rounded-[10px] border border-[#999]" />
      </div>

      <div className="flex h-[47px] items-center gap-[18px] whitespace-nowrap pb-[2px] pl-[18px] pr-4 text-[26px] leading-[36px]">
        <span>日线</span>
        <span className="pl-[2px] font-medium text-[#111]">M3:2982.96</span>
        <span className="font-medium text-[#dcae4e]">M9:2965.02</span>
        <span className="font-medium text-[#c76f82]">M18:2961.22</span>
        <button type="button" className="ml-auto text-[28px] text-[#444]">前复权</button>
      </div>

      <section className="relative">
        <PriceChart />
        <div className="absolute left-[18px] right-[11%] top-[304px] -mr-[2px] flex justify-between">
          {CHART_BUTTONS.map((button) => (
            <button
              key={button.label}
              type="button"
              aria-label={button.label}
              className="grid size-[60px] place-items-center rounded-full bg-[#ebebeb]/80"
            >
              <svg viewBox="0 0 40 40" className="size-10" fill="none" stroke="#555" strokeWidth="3">
                <path d={button.path} />
              </svg>
            </button>
          ))}
        </div>
        <button
          type="button"
          aria-label="最新"
          className="absolute bottom-0 right-4 grid h-14 w-[52px] place-items-center rounded-lg border-2 border-[#f3f3f3] bg-white"
        >
          <svg viewBox="0 0 32 28" className="h-7 w-8" fill="none" stroke="#555" strokeWidth="3">
            <path d="M1 14H23M14 5L23 14L14 23M30 1V27" />
          </svg>
        </button>
      </section>

      <IndicatorPanel name="成交量" chart={<VolumeChart />}>
        <span className="-ml-1 text-[#c4544f]">量:1.37亿</span>
        <span>M5:1.62亿</span>
        <span className="text-[#dd8552]">M10:1.61亿</span>
        <span>
          换手率:<span className="text-[#5fa8d8]">0.39%</span>
        </span>
      </IndicatorPanel>

      <IndicatorPanel name="BOLL(20,2)" wide chart={<BollChart />}>
        <span className="pl-3 text-[#64a6da]">MD:+2964.17</span>
        <span className="pl-3 text-[#b94a46]">UPPER:+3008.07</span>
        <a href="#boll" className="ml-auto text-[#5c8fd6]">指标战法模型</a>
        <span className="absolute left-5 top-[43px] text-[#4f9440]">LOWER:+2920.27</span>
      </IndicatorPanel>

      <div className="relative">
        <IndicatorPanel name="MACD(12,26,9)" wide chart={<MacdChart />}>
          <span className="pl-4 text-[#bd4f4a]">MACD:+5.47</span>
          <span className="pl-5">DIFF:+5.59</span>
          <a href="#macd" className="ml-auto text-[#5c8fd6]">做T降成本&gt;</a>
          <span className="absolute left-5 top-[43px] text-[#dd8a5c]">DEA:+2.85</span>
        </IndicatorPanel>
        <p className="absolute bottom-4 right-5 text-[24px] leading-[34px] text-white [text-shadow:1px_1px_0_#000,2px_1px_1px_#000]">
          头条 @摔杯为号
        </p>
      </div>
    </main>
  )
}
